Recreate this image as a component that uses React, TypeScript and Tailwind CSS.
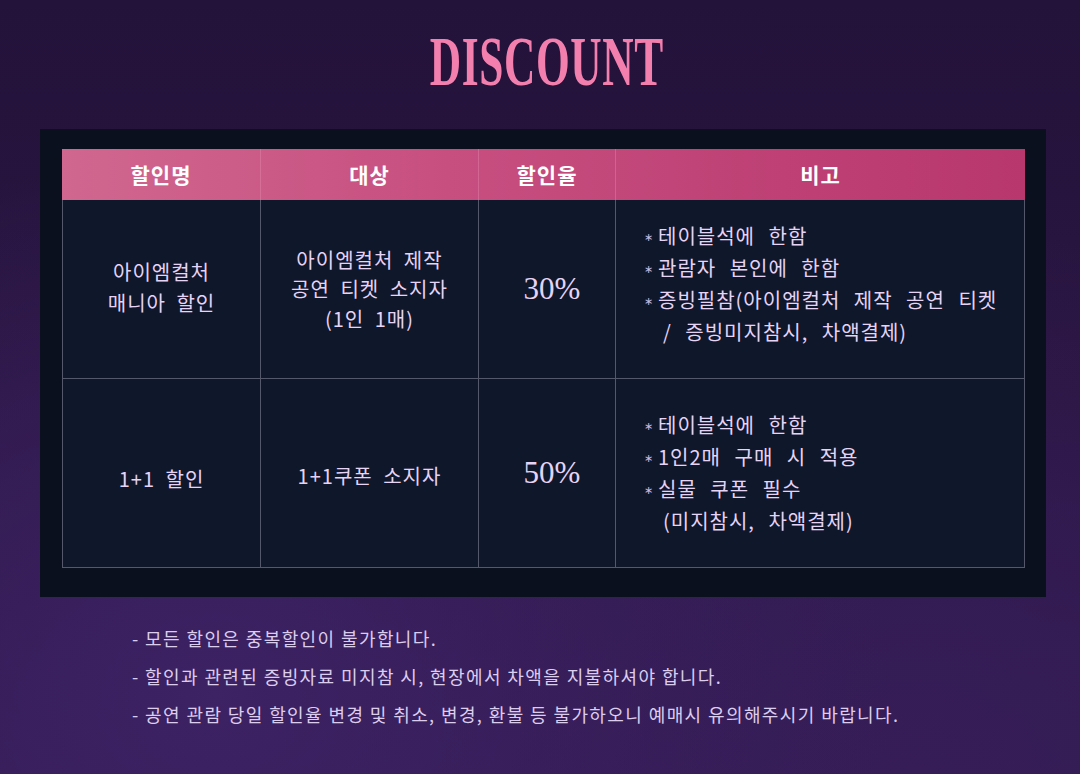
const KR = { fontFamily: '"Noto Sans CJK KR", "Noto Sans", sans-serif' };

const rows = [
  {
    name: ["아이엠컬처", "매니아 할인"],
    target: ["아이엠컬처 제작", "공연 티켓 소지자", "(1인 1매)"],
    rate: "30%",
    notes: [
      { bullet: true, text: "테이블석에 한함" },
      { bullet: true, text: "관람자 본인에 한함" },
      { bullet: true, text: "증빙필참(아이엠컬처 제작 공연 티켓" },
      { bullet: false, text: "/ 증빙미지참시, 차액결제)" },
    ],
    h: "h-[179px]",
    pad: ["pb-[4px]", "pb-0", "pb-0", "pb-[10px]"],
  },
  {
    name: ["1+1 할인"],
    target: ["1+1쿠폰 소지자"],
    rate: "50%",
    notes: [
      { bullet: true, text: "테이블석에 한함" },
      { bullet: true, text: "1인2매 구매 시 적용" },
      { bullet: true, text: "실물 쿠폰 필수" },
      { bullet: false, text: "(미지참시, 차액결제)" },
    ],
    h: "h-[189px]",
    pad: ["pt-[10px]", "pt-[6px]", "pt-0", "pb-0"],
  },
];

const footnotes = [
  "- 모든 할인은 중복할인이 불가합니다.",
  "- 할인과 관련된 증빙자료 미지참 시, 현장에서 차액을 지불하셔야 합니다.",
  "- 공연 관람 당일 할인율 변경 및 취소, 변경, 환불 등 불가하오니 예매시 유의해주시기 바랍니다.",
];

export default function App() {
  return (
    <div
      className="w-[1080px] h-[774px] overflow-hidden flex flex-col items-center bg-[#27143f] bg-[radial-gradient(ellipse_at_20%_90%,#3d2264_0%,transparent_55%),radial-gradient(ellipse_at_85%_100%,#361d58_0%,transparent_50%),linear-gradient(180deg,#23123a_0%,#2a1642_50%,#311a4f_100%)]"
    >
      {/* Title */}
      <div className="h-[129px] w-full flex justify-center pt-[22px] pl-[14px]">
        <h1
          className="text-[70px] leading-[80px] font-bold text-[#f37fae] scale-x-[0.62] tracking-[1px]"
          style={{ fontFamily: '"Liberation Serif", serif' }}
        >
          DISCOUNT
        </h1>
      </div>

      {/* Table panel */}
      <div className="w-[1006px] self-start ml-[40px] bg-[#0a101d] pt-[20px] pl-[22px] pr-[21px] pb-[29px]">
        <div className="w-[963px]" style={KR}>
          {/* Header */}
          <div className="grid grid-cols-[198px_218px_137px_410px] h-[51px] bg-[linear-gradient(90deg,#d0678f_0%,#c74f80_40%,#be4074_75%,#b8386e_100%)] text-white font-bold text-[21px] tracking-[1px]">
            {["할인명", "대상", "할인율", "비고"].map((t, i) => (
              <div
                key={t}
                className={`flex items-center justify-center ${i > 0 ? "border-l border-[#e08fb0]/40" : ""}`}
              >
                {t}
              </div>
            ))}
          </div>

          {/* Body */}
          <div className="border-l border-r border-[#55586a] bg-[#0f182b]">
            {rows.map((r, idx) => (
              <div
                key={idx}
                className={`grid grid-cols-[197px_218px_137px_409px] ${r.h} border-b border-[#55586a] text-[#e6d3f6] text-[20px] tracking-[1px]`}
              >
                <div className={`flex flex-col items-center justify-center leading-[31px] [word-spacing:5px] ${r.pad[0]}`}>
                  {r.name.map((l) => (
                    <span key={l}>{l}</span>
                  ))}
                </div>
                <div className={`flex flex-col items-center justify-center leading-[29.5px] [word-spacing:5px] border-l border-[#55586a] ${r.pad[1]}`}>
                  {r.target.map((l) => (
                    <span key={l}>{l}</span>
                  ))}
                </div>
                <div
                  className={`flex items-center justify-center border-l border-[#55586a] text-[31px] tracking-normal pl-[10px] ${r.pad[2]}`}
                  style={{ fontFamily: '"Liberation Serif", serif' }}
                >
                  {r.rate}
                </div>
                <div className={`flex flex-col justify-center border-l border-[#55586a] pl-[28px] leading-[32px] [word-spacing:8px] ${r.pad[3]}`}>
                  {r.notes.map((n) => (
                    <div key={n.text} className="flex items-center">
                      <span className="w-[14px] text-[11px] leading-[11px] text-[#cbbbe0] tracking-normal">
                        {n.bullet ? "∗" : ""}
                      </span>
                      <span className={n.bullet ? "" : "pl-[5px]"}>{n.text}</span>
                    </div>
                  ))}
                </div>
              </div>
            ))}
          </div>
        </div>
      </div>

      {/* Footnotes */}
      <div
        className="self-start ml-[132px] mt-[22px] flex flex-col text-[18px] tracking-[1.4px] leading-[38px] text-[#dccdee]"
        style={KR}
      >
        {footnotes.map((f) => (
          <p key={f}>{f}</p>
        ))}
      </div>
    </div>
  );
}
